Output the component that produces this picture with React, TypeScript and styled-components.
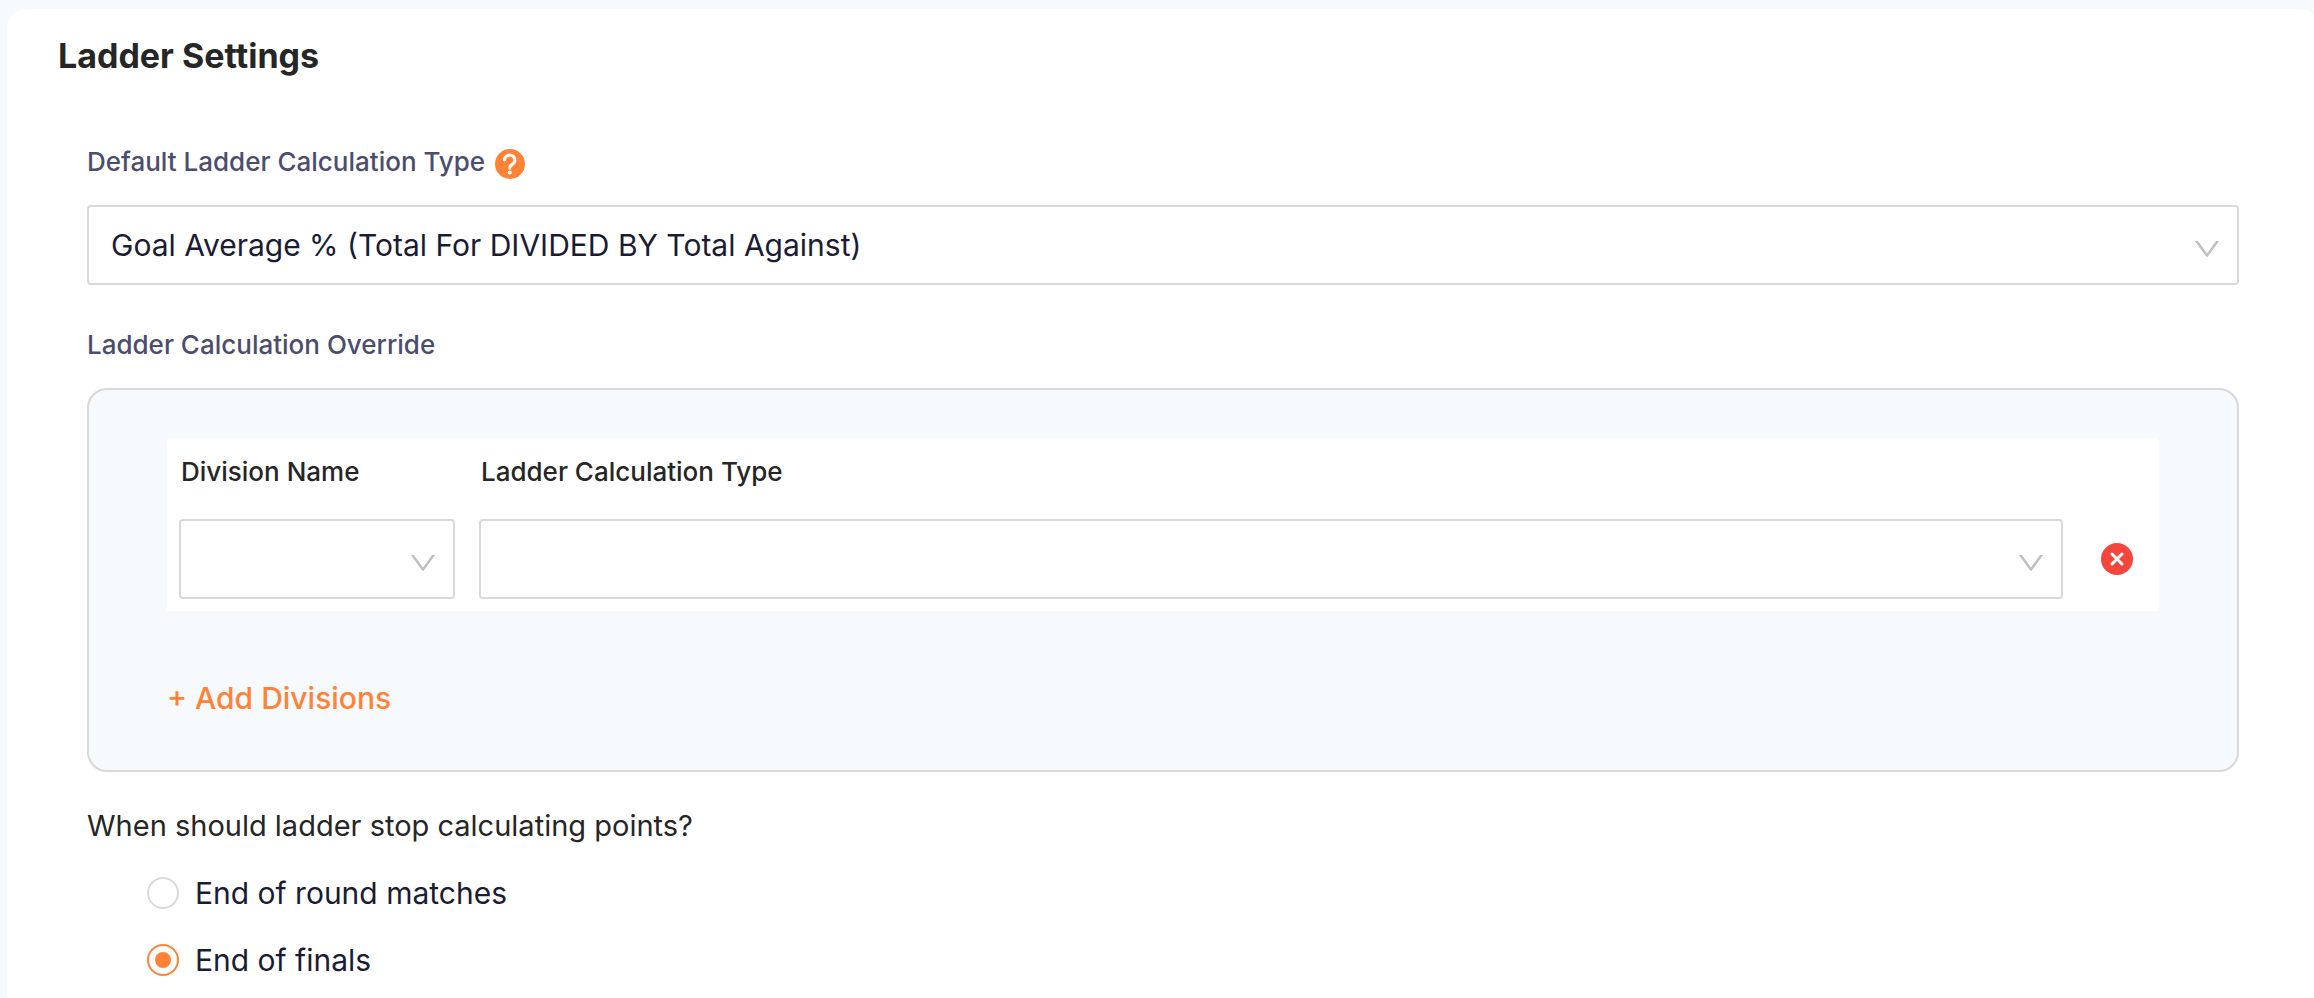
import React, { useState } from 'react';
import styled, { createGlobalStyle } from 'styled-components';

const GlobalStyle = createGlobalStyle`
  *, *::before, *::after { box-sizing: border-box; }
  body {
    margin: 0;
    overflow-x: hidden;
    background: #f6fafd;
    color: #262626;
    font-family: Inter, "Liberation Sans", sans-serif;
    font-size: 30px;
    line-height: 40px;
  }
`;

const Card = styled.main`
  margin: 9px -6px 0 7px;
  padding: 27px 81px 28px 51px;
  min-height: calc(100vh - 9px);
  border-radius: 20px 20px 0 0;
  background: #fff;
`;

const Title = styled.h1`
  margin: 0;
  font-size: 34px;
  line-height: 40px;
  font-weight: 700;
`;

const Form = styled.form`
  margin: 66px 0 0 29px;
`;

const FieldHeader = styled.div`
  display: flex;
  align-items: center;
  gap: 10px;
  height: 40px;
  margin: 0 0 23px;
  color: #4c4d6d;
  font-size: 26px;
  font-weight: 500;
`;

const OverrideHeader = styled(FieldHeader).attrs({ as: 'h2' })`
  margin-top: 40px;
`;

const HelpButton = styled.button`
  display: flex;
  padding: 4px 0 0;
  border: 0;
  background: none;
  cursor: pointer;
`;

const SelectFrame = styled.div`
  position: relative;
`;

const Select = styled.select`
  display: block;
  width: 100%;
  height: 80px;
  padding: 0 64px 0 22px;
  appearance: none;
  border: 2px solid #d9d9d9;
  border-radius: 4px;
  background: #fff;
  color: #1b1b34;
  font: inherit;
  font-weight: 400;
`;

const Arrow = styled.svg`
  position: absolute;
  top: 30px;
  right: 18px;
  width: 28px;
  height: 28px;
  fill: #bfbfbf;
  pointer-events: none;
`;

const Override = styled.fieldset`
  min-width: 0;
  margin: 0;
  padding: 48px 78px 52px;
  border: 2px solid #d9d9d9;
  border-radius: 20px;
  background: #f6fafd;
`;

const DivisionTable = styled.table`
  width: 100%;
  table-layout: fixed;
  border-collapse: separate;
  border-spacing: 0;
  border-radius: 4px 4px 0 0;
  background: #fff;

  th {
    height: 69px;
    padding: 0 0 2px 14px;
    text-align: left;
    font-size: 26px;
    font-weight: 500;
  }
  td { padding: 12px; }
`;

const DivisionColumn = styled.col`
  width: 300px;
`;

const ActionColumn = styled.col`
  width: 84px;
`;

const RemoveButton = styled.button`
  display: block;
  margin-left: 14px;
  padding: 0;
  border: 0;
  background: none;
  line-height: 0;
  cursor: pointer;
`;

const AddButton = styled.button`
  display: block;
  margin-top: 67px;
  padding: 0;
  border: 0;
  background: none;
  color: #ff8237;
  font: inherit;
  font-weight: 500;
  cursor: pointer;
`;

const Choices = styled.fieldset`
  margin: 34px 0 0;
  padding: 0;
  border: 0;
`;

const Question = styled.legend`
  padding: 0;
  font-size: 29px;
`;

const Choice = styled.label`
  display: flex;
  align-items: center;
  gap: 16px;
  width: max-content;
  margin: 27px 0 0 60px;
  color: #1b1b34;
`;

const Radio = styled.input`
  display: grid;
  place-items: center;
  width: 32px;
  height: 32px;
  margin: 0;
  appearance: none;
  border: 2px solid #d9d9d9;
  border-radius: 50%;
  background: #fff;

  &:checked { border-color: #ff8237; }
  &:checked::before {
    content: "";
    width: 16px;
    height: 16px;
    border-radius: 50%;
    background: #ff8237;
  }
`;

type DropdownProps = React.SelectHTMLAttributes<HTMLSelectElement>;

function Dropdown(props: DropdownProps) {
  return (
    <SelectFrame>
      <Select {...props} />
      <Arrow viewBox="64 64 896 896" aria-hidden="true">
        <path d="M884 256h-75c-5.1 0-9.9 2.5-12.9 6.6L512 654.2 227.9 262.6c-3-4.1-7.8-6.6-12.9-6.6h-75c-6.5 0-10.3 7.4-6.5 12.7l352.6 486.1c12.8 17.6 39 17.6 51.7 0l352.6-486.1c3.9-5.3.1-12.7-6.4-12.7z" />
      </Arrow>
    </SelectFrame>
  );
}

const stopOptions = ['End of round matches', 'End of finals'];

export default function App() {
  const [stopAt, setStopAt] = useState(stopOptions[1]);

  return (
    <>
      <GlobalStyle />
      <Card>
        <Title>Ladder Settings</Title>
        <Form>
          <FieldHeader>
            <label htmlFor="default-type">Default Ladder Calculation Type</label>
            <HelpButton type="button" aria-label="Help">
              <svg width="30" height="30" viewBox="0 0 30 30">
                <circle cx="15" cy="15" r="15" fill="#ff8237" />
                <path d="M9.5 11a5.2 5 0 1 1 7.8 4.4c-1.8 1-2.6 2-2.6 3.8" fill="none" stroke="#fff" strokeWidth="3" strokeLinecap="round" />
                <circle cx="14.7" cy="23.4" r="2" fill="#fff" />
              </svg>
            </HelpButton>
          </FieldHeader>
          <Dropdown id="default-type">
            <option>Goal Average % (Total For DIVIDED BY Total Against)</option>
          </Dropdown>
          <OverrideHeader id="override-label">Ladder Calculation Override</OverrideHeader>
          <Override aria-labelledby="override-label">
            <DivisionTable>
              <colgroup>
                <DivisionColumn />
                <col />
                <ActionColumn />
              </colgroup>
              <thead>
                <tr>
                  <th id="division-name">Division Name</th>
                  <th id="calculation-type">Ladder Calculation Type</th>
                  <td />
                </tr>
              </thead>
              <tbody>
                <tr>
                  <td><Dropdown aria-labelledby="division-name" /></td>
                  <td><Dropdown aria-labelledby="calculation-type" /></td>
                  <td>
                    <RemoveButton type="button" aria-label="Remove division">
                      <svg width="32" height="32" viewBox="0 0 32 32">
                        <circle cx="16" cy="16" r="16" fill="#f4463d" />
                        <path d="M11 11l10 10M21 11L11 21" stroke="#fff" strokeWidth="3" strokeLinecap="round" />
                      </svg>
                    </RemoveButton>
                  </td>
                </tr>
              </tbody>
            </DivisionTable>
            <AddButton type="button">+ Add Divisions</AddButton>
          </Override>
          <Choices>
            <Question>When should ladder stop calculating points?</Question>
            {stopOptions.map((option) => (
              <Choice key={option}>
                <Radio type="radio" name="stop" checked={stopAt === option} onChange={() => setStopAt(option)} />
                {option}
              </Choice>
            ))}
          </Choices>
        </Form>
      </Card>
    </>
  );
}
